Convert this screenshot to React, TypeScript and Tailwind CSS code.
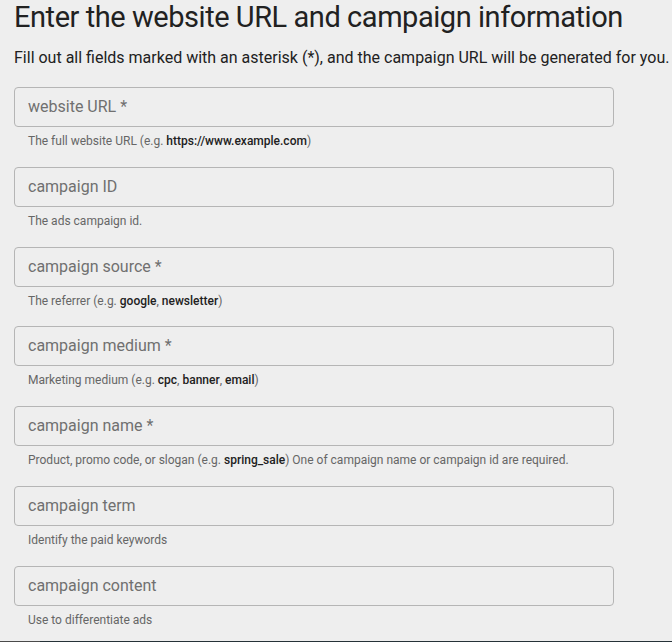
import React from "react";

type Field = { label: string; help: React.ReactNode };

const B = ({ children }: { children: React.ReactNode }) => (
  <span className="font-medium text-[#212121]">{children}</span>
);

const fields: Field[] = [
  { label: "website URL *", help: <>The full website URL (e.g. <B>https://www.example.com</B>)</> },
  { label: "campaign ID", help: <>The ads campaign id.</> },
  { label: "campaign source *", help: <>The referrer (e.g. <B>google</B>, <B>newsletter</B>)</> },
  { label: "campaign medium *", help: <>Marketing medium (e.g. <B>cpc</B>, <B>banner</B>, <B>email</B>)</> },
  {
    label: "campaign name *",
    help: <>Product, promo code, or slogan (e.g. <B>spring_sale</B>) One of campaign name or campaign id are required.</>,
  },
  { label: "campaign term", help: <>Identify the paid keywords</> },
  { label: "campaign content", help: <>Use to differentiate ads</> },
];

export default function App() {
  return (
    <div className="h-[642px] w-[672px] overflow-hidden bg-[#eeeeee] font-['Roboto',sans-serif] flex flex-col relative">
      <div className="px-[14px]">
        <h1 className="text-[29px] leading-[34px] tracking-[-0.45px] text-[#212121] font-normal mt-0 whitespace-nowrap">
          Enter the website URL and campaign information
        </h1>
        <p className="text-[16px] leading-[20px] text-[#212121] mt-[14px] whitespace-nowrap">
          Fill out all fields marked with an asterisk (*), and the campaign URL will be generated for you.
        </p>
        <div className="mt-[19px] flex flex-col">
          {fields.map((f, i) => (
            <div key={i} className="h-[79.83px] shrink-0">
              <div className="w-[600px] h-[40px] border border-[#b5b5b5] rounded-[4px] flex items-center px-[13px]">
                <span className="text-[16px] text-[#707070]">{f.label}</span>
              </div>
              <div className="px-[14px] mt-[6px] text-[12px] leading-[16px] text-[#666666]">{f.help}</div>
            </div>
          ))}
        </div>
      </div>
      <div className="absolute bottom-0 left-0 right-0 h-[1px] flex">
        <div className="w-[40px] bg-[#4a4a4a]" />
        <div className="flex-1 bg-[#263238]" />
      </div>
    </div>
  );
}
